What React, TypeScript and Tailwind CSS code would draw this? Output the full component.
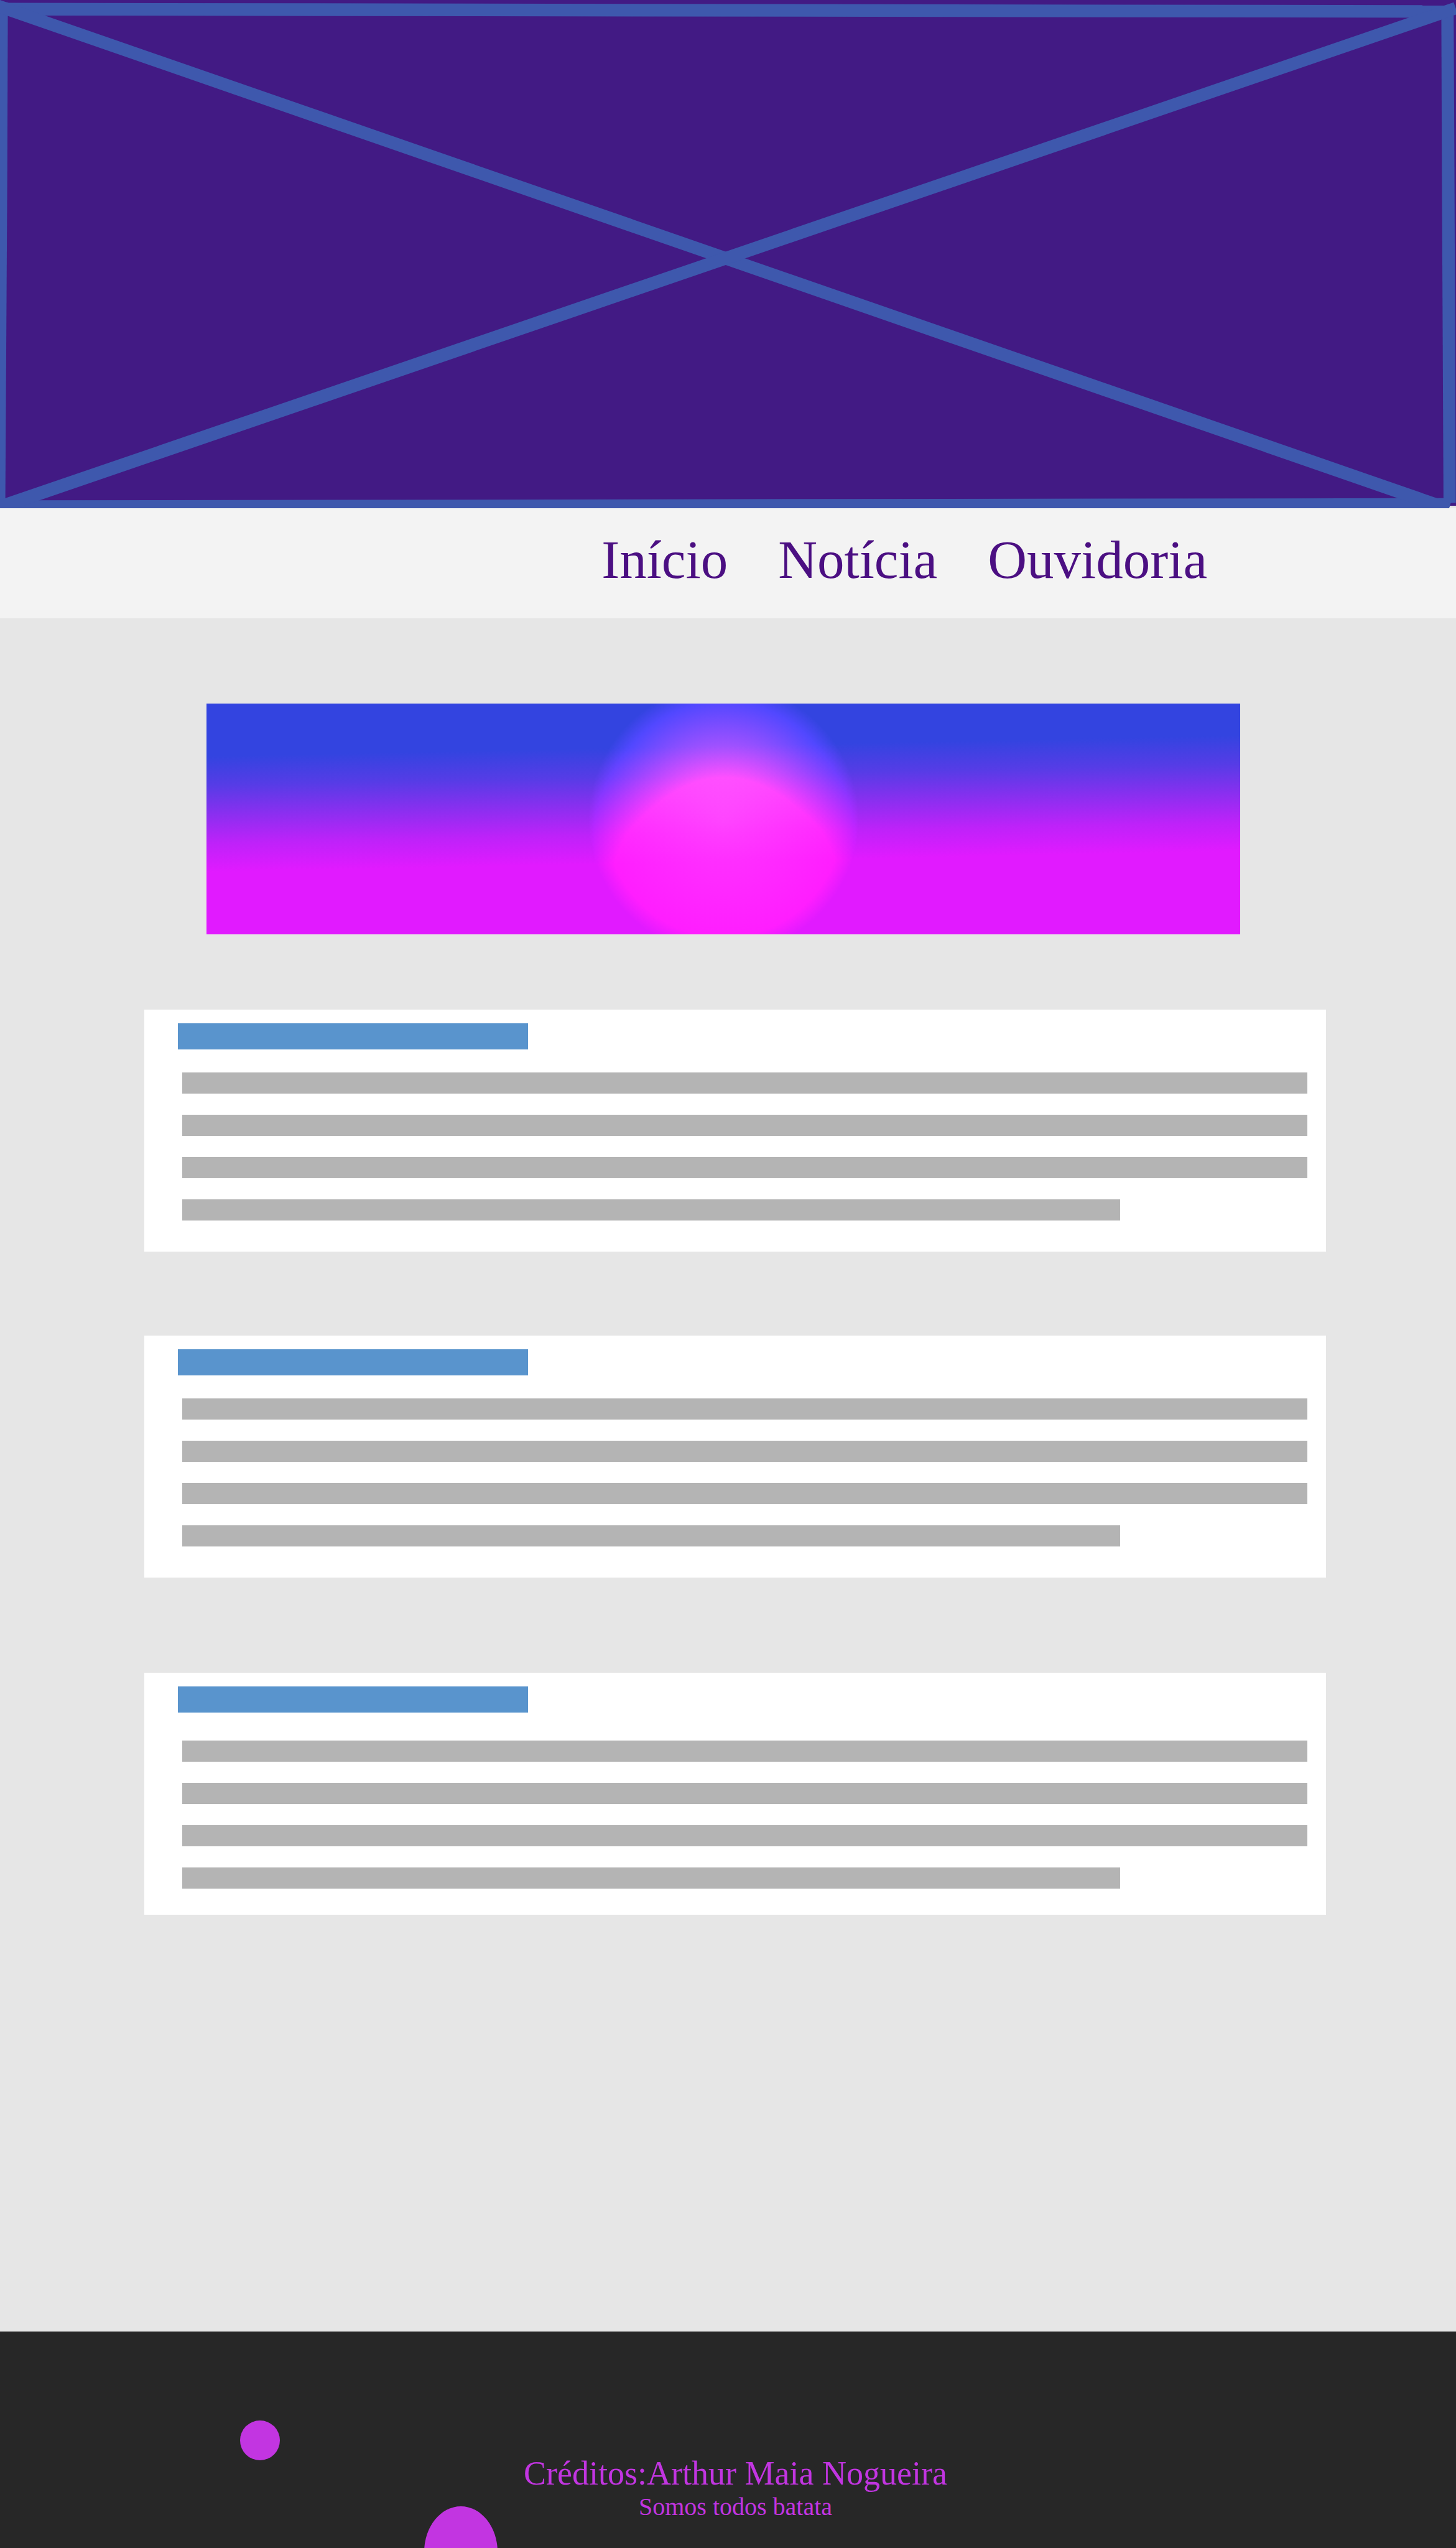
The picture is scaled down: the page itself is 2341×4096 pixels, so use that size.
const links = [
  { label: "Início", href: "#inicio" },
  { label: "Notícia", href: "#noticia" },
  { label: "Ouvidoria", href: "#ouvidoria" },
];

function Hero() {
  return (
    <svg
      className="block h-[817px] w-full bg-[#e6e6e6]"
      viewBox="0 0 2480 866"
      preserveAspectRatio="none"
      role="img"
      aria-label="Imagem de capa"
    >
      <rect width="2480" height="862" fill="#421a84" />
      <rect y="862" width="2470" height="4" fill="#3e58ad" />
      <path d="M2468 866L2480 866L2480 862L2469.5 862Z" fill="#e6e6e6" />
      <g fill="#3e58ad">
        <path d="M0 4.8L13 4.8L2464 8.8L2464 30.2L0 26.4Z" />
        <path d="M0 4L13.4 4L12.4 300L9 866L0 866Z" />
        <path d="M2455 20L2476 20L2477.4 300L2479.6 857L2458.7 857L2456 300Z" />
        <path d="M0 852.6L2471 848.7L2471 857L2468 866L0 866Z" />
        <path d="M0 0L2471 857L2468 866L2430 866L0 22.5Z" />
        <path d="M0 852L2476 4L2480 15L2480 25L28 866L0 866Z" />
      </g>
    </svg>
  );
}

function Banner() {
  return (
    <svg
      className="isolate block h-[371px] w-full"
      viewBox="0 0 1761 393"
      preserveAspectRatio="none"
      role="img"
      aria-label="Pôr do sol"
    >
      <defs>
        <linearGradient id="sky" gradientUnits="userSpaceOnUse" x1="878" y1="72" x2="882" y2="269">
          <stop offset="0" stopColor="#3344e0" />
          <stop offset="0.25" stopColor="#563ce6" />
          <stop offset="0.75" stopColor="#be22f9" />
          <stop offset="1" stopColor="#e11aff" />
        </linearGradient>
        <radialGradient id="sun" gradientUnits="userSpaceOnUse" cx="881" cy="197" r="230">
          <stop offset="0" stopColor="rgb(238,29,244)" />
          <stop offset="1" stopColor="rgb(0,0,0)" />
        </radialGradient>
      </defs>
      <rect width="1761" height="393" fill="url(#sky)" />
      <circle className="mix-blend-plus-lighter" cx="881" cy="197" r="230" fill="url(#sun)" />
    </svg>
  );
}

function NewsCard({ roomy = false }: { roomy?: boolean }) {
  return (
    <article className="flex h-[389px] flex-col bg-white pt-[22px] pr-[30px] pl-[54px]">
      <div className="h-[42px] w-[31%] bg-[#5994cd]" />
      <div className={roomy ? "mt-[45px] ml-[7px] grid gap-[34px]" : "mt-[37px] ml-[7px] grid gap-[34px]"}>
        <div className="h-[34px] bg-[#b4b4b4]" />
        <div className="h-[34px] bg-[#b4b4b4]" />
        <div className="h-[34px] bg-[#b4b4b4]" />
        <div className="h-[34px] w-5/6 bg-[#b4b4b4]" />
      </div>
    </article>
  );
}

export default function App() {
  return (
    <div className="flex min-h-screen flex-col bg-[#e6e6e6] font-['Liberation_Serif',serif]">
      <header>
        <Hero />
        <nav className="flex h-[177px] items-center justify-end gap-[81px] bg-[#f3f3f3] pr-[400px] pb-[12px] text-[87px] leading-none text-[#4b0f82]">
          {links.map((link) => (
            <a key={link.href} href={link.href}>
              {link.label}
            </a>
          ))}
        </nav>
      </header>

      <main className="flex-1 pt-[137px] pr-[209px] pl-[232px]">
        <div className="mr-[138px] ml-[100px]">
          <Banner />
        </div>
        <div className="mt-[121px]">
          <NewsCard />
        </div>
        <div className="mt-[135px]">
          <NewsCard />
        </div>
        <div className="mt-[153px]">
          <NewsCard roomy />
        </div>
      </main>

      <footer className="relative h-[348px] overflow-hidden bg-[#272727] pt-[198px] pl-[24px] text-center text-[#c235e1]">
        <span className="absolute top-[143px] left-[386px] size-[64px] rounded-full bg-[#c235e1]" />
        <span className="absolute top-[281px] left-[682px] h-[147px] w-[118px] rounded-[50%] bg-[#c235e1]" />
        <p className="text-[54px] leading-[60px]">Créditos:Arthur Maia Nogueira</p>
        <p className="text-[40px] leading-[48px]">Somos todos batata</p>
      </footer>
    </div>
  );
}
